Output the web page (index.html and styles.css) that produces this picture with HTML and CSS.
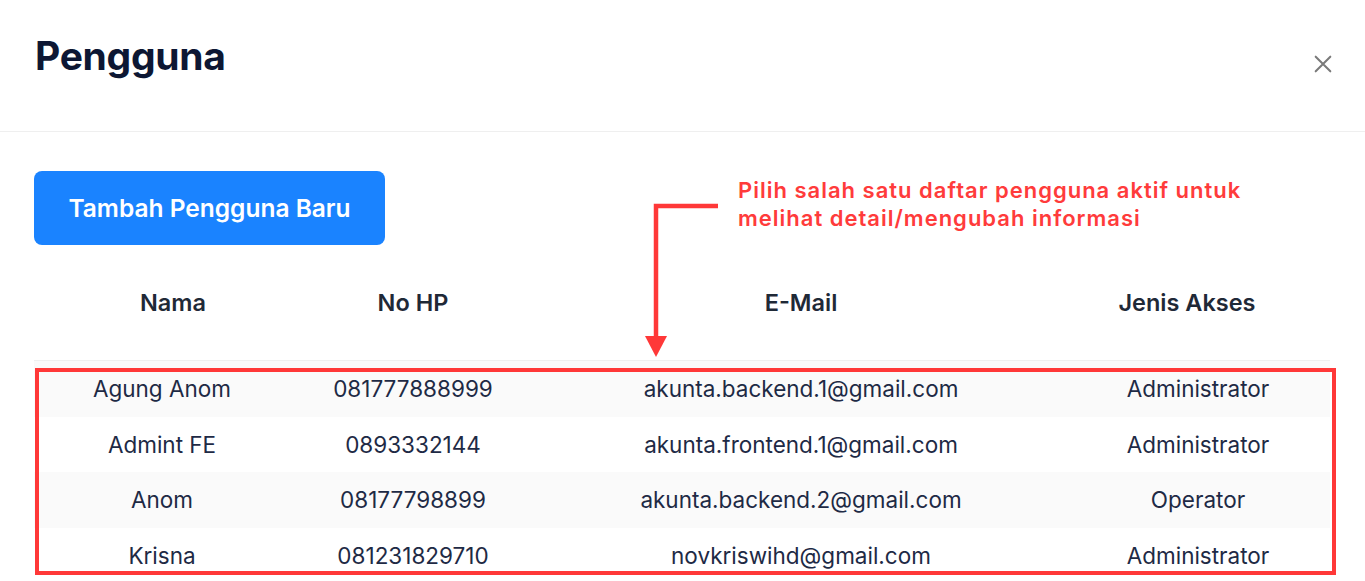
FILE: index.html
```html
<!DOCTYPE html>
<html lang="id">
<head>
<meta charset="utf-8">
<title>Pengguna</title>
<link rel="stylesheet" href="styles.css">
</head>
<body>
<div class="modal">
  <header class="modal-head">
    <h1 class="modal-title">Pengguna</h1>
    <button class="close" aria-label="Tutup">
      <svg viewBox="0 0 16 16" width="18" height="18"><path d="M1.5 1.5 L14.5 14.5 M14.5 1.5 L1.5 14.5" stroke="#7a7a7a" stroke-width="1.8" fill="none" stroke-linecap="round"/></svg>
    </button>
  </header>
  <div class="modal-body">
    <div class="toolbar">
      <button class="btn-primary">Tambah Pengguna Baru</button>
    </div>
    <div class="table">
      <div class="thead">
        <div class="th">Nama</div>
        <div class="th">No HP</div>
        <div class="th">E-Mail</div>
        <div class="th">Jenis Akses</div>
        <div class="th"></div>
      </div>
      <div class="tbody">
        <div class="tr"><div class="td">Agung Anom</div><div class="td">081777888999</div><div class="td">akunta.backend.1@gmail.com</div><div class="td">Administrator</div></div>
        <div class="tr"><div class="td">Admint FE</div><div class="td">0893332144</div><div class="td">akunta.frontend.1@gmail.com</div><div class="td">Administrator</div></div>
        <div class="tr"><div class="td">Anom</div><div class="td">08177798899</div><div class="td">akunta.backend.2@gmail.com</div><div class="td">Operator</div></div>
        <div class="tr"><div class="td">Krisna</div><div class="td">081231829710</div><div class="td">novkriswihd@gmail.com</div><div class="td">Administrator</div></div>
      </div>
    </div>
  </div>
</div>

<div class="note-text">Pilih salah satu daftar pengguna aktif untuk<br>melihat detail/mengubah informasi</div>
<svg class="note-arrow" viewBox="640 198 90 165" width="90" height="165">
  <path d="M718 206 H656 V338" stroke="#ff3838" stroke-width="4.5" fill="none"/>
  <polygon points="645,336 667,336 656,357" fill="#ff3838"/>
</svg>
<div class="note-box"></div>
</body>
</html>
```

FILE: styles.css
```css
* { box-sizing: border-box; }
html, body { margin: 0; padding: 0; }
body {
  width: 1365px;
  height: 581px;
  overflow: hidden;
  background: #ffffff;
  font-family: Inter, "Noto Sans", "Liberation Sans", sans-serif;
  color: #1e2a45;
  position: relative;
}
.modal { width: 1365px; }
.modal-head {
  display: flex;
  justify-content: space-between;
  align-items: flex-start;
  padding: 34px 32px 0 35px;
  height: 132px;
  border-bottom: 1px solid #efefef;
}
.modal-title {
  margin: 0;
  font-size: 39px;
  line-height: 44px;
  font-weight: 700;
  color: #0d1733;
  letter-spacing: -0.3px;
}
.close {
  border: 0;
  background: transparent;
  padding: 0;
  margin-top: 20px;
  width: 20px;
  height: 20px;
  display: flex;
  align-items: center;
  justify-content: center;
}
.modal-body { padding: 39px 35px 0 34px; }
.toolbar { display: flex; }
.btn-primary {
  width: 351px;
  height: 74px;
  border: 0;
  border-radius: 8px;
  background: #1a83ff;
  color: #ffffff;
  font-family: inherit;
  font-size: 24.5px;
  font-weight: 600;
}
.thead {
  display: grid;
  grid-template-columns: 278px 202px 574px 198px 1fr;
  height: 116px;
  align-items: center;
  border-bottom: 1px solid #efefef;
}
.th {
  text-align: center;
  font-size: 23.5px;
  font-weight: 600;
  color: #1f2937;
}
.tr {
  display: grid;
  grid-template-columns: 256px 246px 530px 264px;
  height: 55.5px;
  align-items: center;
}
.tr:nth-child(odd) { background: #fafafa; }
.td {
  text-align: center;
  font-size: 22.5px;
  color: #1e2a45;
}
.note-text {
  position: absolute;
  left: 738px;
  top: 176px;
  font-size: 22px;
  line-height: 28px;
  font-weight: 600;
  letter-spacing: 1px;
  color: #ff3b3b;
}
.note-arrow {
  position: absolute;
  left: 640px;
  top: 198px;
}
.note-box {
  position: absolute;
  left: 35px;
  top: 368px;
  width: 1301px;
  height: 207px;
  border: 4px solid #ff3838;
}
```
